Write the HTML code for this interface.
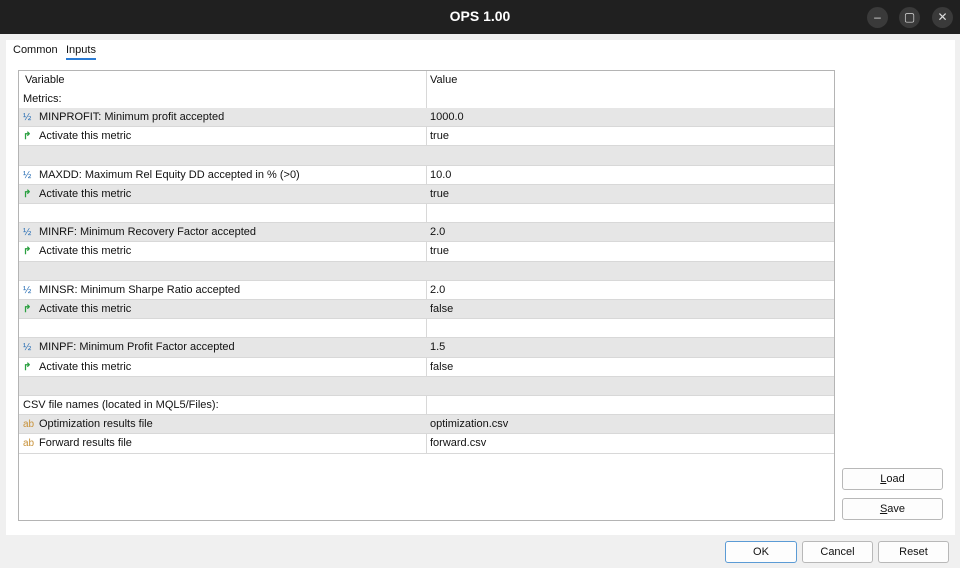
<!DOCTYPE html>
<html><head><meta charset="utf-8"><style>
*{margin:0;padding:0;box-sizing:border-box}
body{width:960px;height:568px;background:#f0f0f0;font-family:"Liberation Sans",sans-serif;font-size:11px;color:#111;position:relative;overflow:hidden}
.title{position:absolute;left:0;top:0;width:960px;height:34px;background:#202020;color:#fff;font-weight:bold;font-size:14px;text-align:center;line-height:33px}
.wb{position:absolute;top:7px;width:21px;height:21px;border-radius:50%;background:#3a3a3a;color:#ddd;text-align:center;line-height:21px;font-size:12px}
.panel{position:absolute;left:6px;top:40px;width:949px;height:495px;background:#fff}
.tab{position:absolute;top:44px;font-size:11px}
.grid{position:absolute;left:18px;top:70px;width:817px;height:451px;border:1px solid #b4b4b4;background:#fff}
.row{position:absolute;left:0;width:815px;height:19.2px;border-bottom:1px solid #d8d8d8;line-height:18px}
.g{background:#e6e6e6}
.c1{position:absolute;left:4px;top:0;white-space:nowrap}
.c2{position:absolute;left:411px;top:0}
.vl{position:absolute;left:407px;top:0;width:1px;height:382px;background:#d8d8d8}
.ic{display:inline-block;width:16px;font-size:10px}
.h{color:#2a6fb5}.a{color:#2aa040;font-weight:bold}.s{color:#c8923a}
.btn{position:absolute;height:22px;border:1px solid #b8b8b8;border-radius:3px;background:#fdfdfd;text-align:center;line-height:20px;font-size:11px}
</style></head><body>
<div class="title">OPS 1.00</div>
<div class="wb" style="left:867px">–</div>
<div class="wb" style="left:899px">▢</div>
<div class="wb" style="left:932px">✕</div>
<div class="panel"></div>
<div class="tab" style="left:13px">Common</div>
<div class="tab" style="left:66px">Inputs</div>
<div style="position:absolute;left:66px;top:58px;width:30px;height:2px;background:#2a7bd4"></div>
<div class="grid">
<div class="vl"></div>
<div class="row" style="top:0;border:none"><span class="c1" style="left:6px">Variable</span><span class="c2">Value</span></div>
<div class="row" style="top:18.5px;border:none"><span class="c1">Metrics:</span></div>
<div class="row g" style="top:37px"><span class="c1"><span class="ic h">½</span>MINPROFIT: Minimum profit accepted</span><span class="c2">1000.0</span></div>
<div class="row" style="top:56.2px"><span class="c1"><span class="ic a">↱</span>Activate this metric</span><span class="c2">true</span></div>
<div class="row g" style="top:75.4px"></div>
<div class="row" style="top:94.6px"><span class="c1"><span class="ic h">½</span>MAXDD: Maximum Rel Equity DD accepted in % (&gt;0)</span><span class="c2">10.0</span></div>
<div class="row g" style="top:113.8px"><span class="c1"><span class="ic a">↱</span>Activate this metric</span><span class="c2">true</span></div>
<div class="row" style="top:133px"></div>
<div class="row g" style="top:152.2px"><span class="c1"><span class="ic h">½</span>MINRF: Minimum Recovery Factor accepted</span><span class="c2">2.0</span></div>
<div class="row" style="top:171.4px"><span class="c1"><span class="ic a">↱</span>Activate this metric</span><span class="c2">true</span></div>
<div class="row g" style="top:190.6px"></div>
<div class="row" style="top:209.8px"><span class="c1"><span class="ic h">½</span>MINSR: Minimum Sharpe Ratio accepted</span><span class="c2">2.0</span></div>
<div class="row g" style="top:229px"><span class="c1"><span class="ic a">↱</span>Activate this metric</span><span class="c2">false</span></div>
<div class="row" style="top:248.2px"></div>
<div class="row g" style="top:267.4px"><span class="c1"><span class="ic h">½</span>MINPF: Minimum Profit Factor accepted</span><span class="c2">1.5</span></div>
<div class="row" style="top:286.6px"><span class="c1"><span class="ic a">↱</span>Activate this metric</span><span class="c2">false</span></div>
<div class="row g" style="top:305.8px"></div>
<div class="row" style="top:325px"><span class="c1">CSV file names (located in MQL5/Files):</span></div>
<div class="row g" style="top:344.2px"><span class="c1"><span class="ic s">ab</span>Optimization results file</span><span class="c2">optimization.csv</span></div>
<div class="row" style="top:363.4px"><span class="c1"><span class="ic s">ab</span>Forward results file</span><span class="c2">forward.csv</span></div>
</div>
<div class="btn" style="left:842px;top:468px;width:101px"><u>L</u>oad</div>
<div class="btn" style="left:842px;top:498px;width:101px"><u>S</u>ave</div>
<div class="btn" style="left:725px;top:541px;width:72px;border-color:#5b9bd5">OK</div>
<div class="btn" style="left:802px;top:541px;width:71px">Cancel</div>
<div class="btn" style="left:878px;top:541px;width:71px">Reset</div>
</body></html>
